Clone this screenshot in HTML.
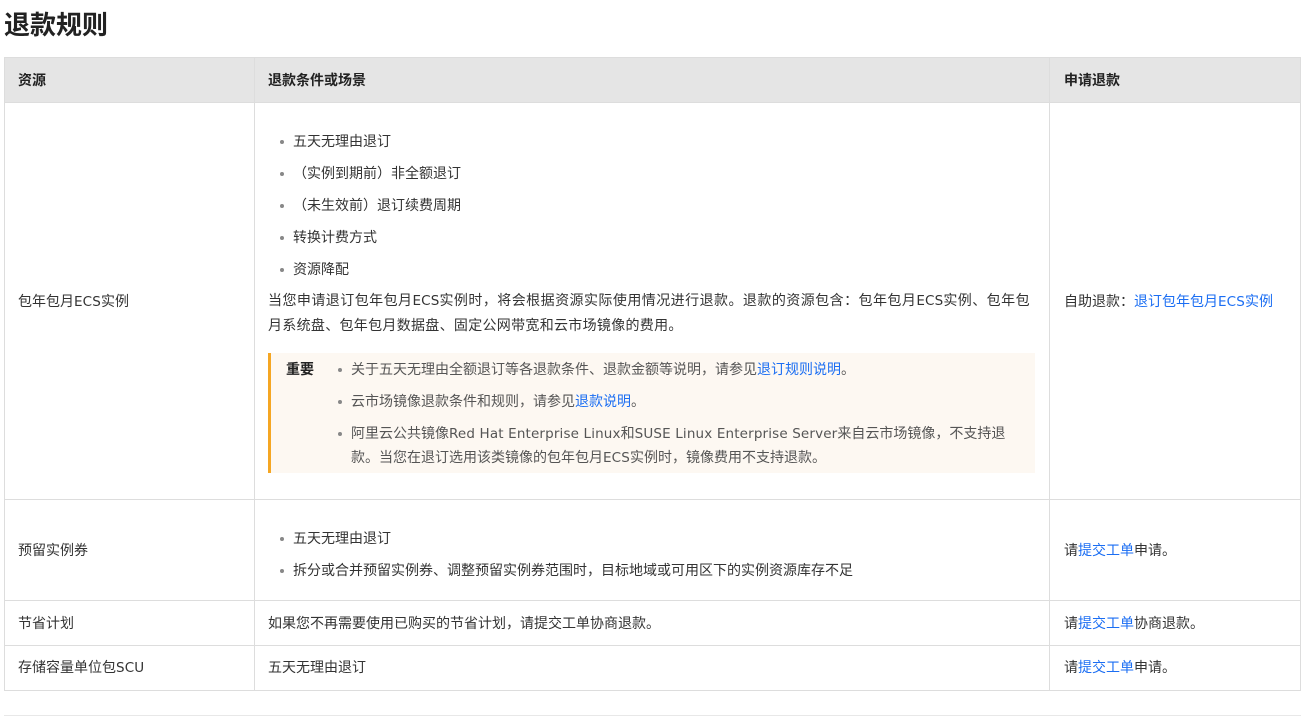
<!DOCTYPE html>
<html><head><meta charset="utf-8"><style>
body{margin:0;width:1306px;height:719px;background:#fff;font-family:"Liberation Sans","Noto Sans CJK SC",sans-serif;color:#333;font-size:14px;position:relative;overflow:hidden;text-spacing-trim:space-all}
.a{position:absolute;white-space:nowrap;line-height:18px}
h1{position:absolute;left:4px;top:8px;margin:0;font-size:26px;line-height:34px;font-weight:bold;color:#222}
.box{position:absolute;border:1px solid #ddd;box-sizing:border-box}
.hl{position:absolute;height:1px;background:#ddd}
.vl{position:absolute;width:1px;background:#ddd}
a{color:#1b6ef3;text-decoration:none}
.b{position:absolute;width:4px;height:4px;border-radius:2px;background:#888}
.g{color:#555}
.L{font-family:"DejaVu Sans",sans-serif;font-size:13.5px;letter-spacing:.15px}
</style></head><body>
<h1>退款规则</h1>
<div style="position:absolute;left:4px;top:57px;width:1296px;height:45px;background:#e5e5e5"></div>
<div class="box" style="left:4px;top:57px;width:1297px;height:634px"></div>
<div class="hl" style="left:4px;top:102px;width:1297px"></div>
<div class="hl" style="left:4px;top:499px;width:1297px"></div>
<div class="hl" style="left:4px;top:600px;width:1297px"></div>
<div class="hl" style="left:4px;top:645px;width:1297px"></div>
<div class="vl" style="left:254px;top:57px;height:634px"></div>
<div class="vl" style="left:1049px;top:57px;height:634px"></div>
<div class="hl" style="left:4px;top:715px;width:1297px;background:#e8e8e8"></div>

<div class="a" style="left:18px;top:71px;font-weight:bold;color:#222">资源</div>
<div class="a" style="left:268px;top:71px;font-weight:bold;color:#222">退款条件或场景</div>
<div class="a" style="left:1064px;top:71px;font-weight:bold;color:#222">申请退款</div>

<div class="a" style="left:18px;top:292px">包年包月<span class="L">ECS</span>实例</div>
<div class="b" style="left:280px;top:140px"></div><div class="a" style="left:293px;top:132px">五天无理由退订</div>
<div class="b" style="left:280px;top:172px"></div><div class="a" style="left:293px;top:164px">（实例到期前）非全额退订</div>
<div class="b" style="left:280px;top:204px"></div><div class="a" style="left:293px;top:196px">（未生效前）退订续费周期</div>
<div class="b" style="left:280px;top:236px"></div><div class="a" style="left:293px;top:228px">转换计费方式</div>
<div class="b" style="left:280px;top:268px"></div><div class="a" style="left:293px;top:260px">资源降配</div>
<div class="a" style="left:268px;top:291px;letter-spacing:.45px">当您申请退订包年包月<span class="L">ECS</span>实例时，将会根据资源实际使用情况进行退款。退款的资源包含：包年包月<span class="L">ECS</span>实例、包年包</div>
<div class="a" style="left:268px;top:316px;letter-spacing:.3px">月系统盘、包年包月数据盘、固定公网带宽和云市场镜像的费用。</div>
<div style="position:absolute;left:268px;top:353px;width:767px;height:120px;background:#fdf8f2;border-left:3px solid #f5a623;box-sizing:border-box"></div>
<div class="a" style="left:286px;top:360px;font-weight:bold;color:#222">重要</div>
<div class="b" style="left:338px;top:368px"></div><div class="a g" style="left:351px;top:360px">关于五天无理由全额退订等各退款条件、退款金额等说明，请参见<a>退订规则说明</a>。</div>
<div class="b" style="left:338px;top:400px"></div><div class="a g" style="left:351px;top:392px">云市场镜像退款条件和规则，请参见<a>退款说明</a>。</div>
<div class="b" style="left:338px;top:432px"></div><div class="a g" style="left:351px;top:424px">阿里云公共镜像<span class="L">Red Hat Enterprise Linux</span>和<span class="L">SUSE Linux Enterprise Server</span>来自云市场镜像，不支持退</div>
<div class="a g" style="left:351px;top:448px">款。当您在退订选用该类镜像的包年包月<span class="L">ECS</span>实例时，镜像费用不支持退款。</div>
<div class="a" style="left:1064px;top:292px">自助退款：<a>退订包年包月<span class="L">ECS</span>实例</a></div>

<div class="a" style="left:18px;top:541px">预留实例券</div>
<div class="b" style="left:280px;top:537px"></div><div class="a" style="left:293px;top:529px">五天无理由退订</div>
<div class="b" style="left:280px;top:569px"></div><div class="a" style="left:293px;top:561px">拆分或合并预留实例券、调整预留实例券范围时，目标地域或可用区下的实例资源库存不足</div>
<div class="a" style="left:1064px;top:541px">请<a>提交工单</a>申请。</div>

<div class="a" style="left:18px;top:614px">节省计划</div>
<div class="a" style="left:268px;top:614px">如果您不再需要使用已购买的节省计划，请提交工单协商退款。</div>
<div class="a" style="left:1064px;top:614px">请<a>提交工单</a>协商退款。</div>

<div class="a" style="left:18px;top:658px">存储容量单位包<span class="L">SCU</span></div>
<div class="a" style="left:268px;top:658px">五天无理由退订</div>
<div class="a" style="left:1064px;top:658px">请<a>提交工单</a>申请。</div>
</body></html>
